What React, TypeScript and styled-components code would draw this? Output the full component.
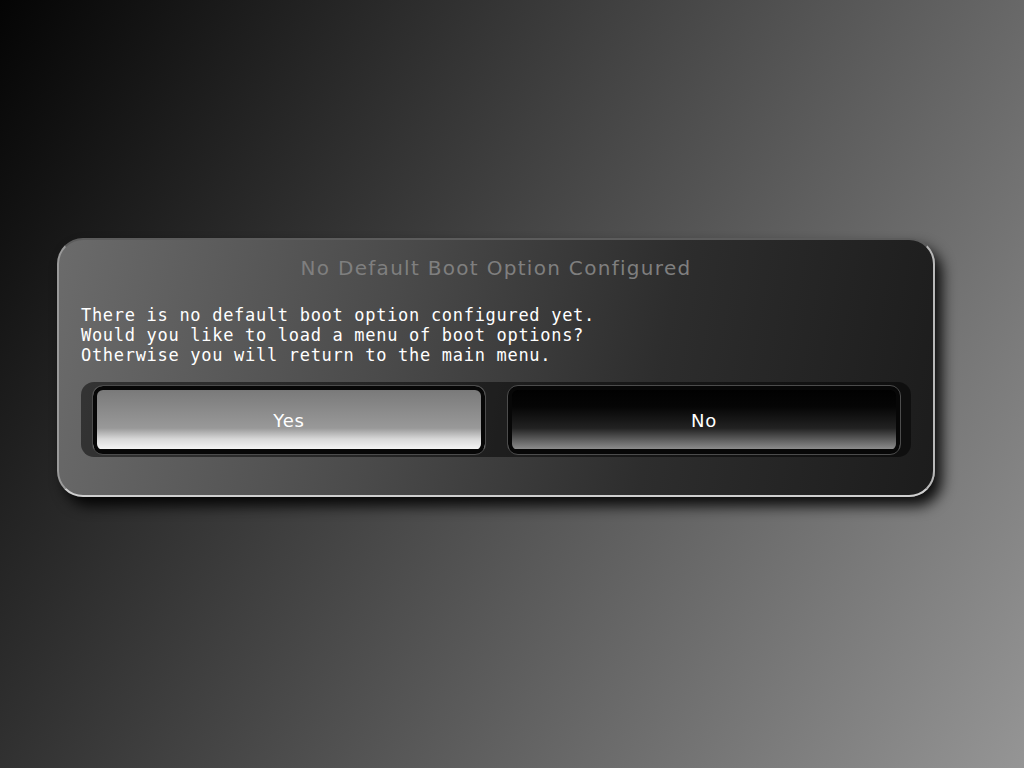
import React from "react";
import styled, { createGlobalStyle } from "styled-components";

const GlobalStyle = createGlobalStyle`
  html, body {
    margin: 0;
    padding: 0;
    height: 100%;
  }
  body {
    background: linear-gradient(121deg, #040404 0%, #959595 100%);
    font-family: "DejaVu Sans", sans-serif;
    overflow: hidden;
  }
`;

const Screen = styled.div`
  width: 1024px;
  height: 768px;
  box-sizing: border-box;
  padding: 238px 0 0 57px;
`;

const Dialog = styled.div`
  width: 878px;
  height: 259px;
  box-sizing: border-box;
  border-radius: 26px;
  border: 2px solid;
  border-color: #5c5c5c #b8b8b8 #cfcfcf #9a9a9a;
  background: linear-gradient(100deg, #6b6b6b 0%, #4a4a4a 38%, #2d2d2d 68%, #1c1c1c 100%);
  box-shadow: 7px 9px 14px rgba(0, 0, 0, 0.9);
  padding: 13px 22px 0 22px;
  display: flex;
  flex-direction: column;
`;

const Title = styled.div`
  height: 30px;
  line-height: 30px;
  text-align: center;
  font-size: 20px;
  letter-spacing: 1.3px;
  color: #7f7f7f;
`;

const Message = styled.div`
  margin-top: 22px;
  font-family: "DejaVu Sans Mono", monospace;
  font-size: 17px;
  letter-spacing: 0.7px;
  line-height: 20px;
  color: #ffffff;
  white-space: pre;
`;

const ButtonTrack = styled.div`
  margin-top: 17px;
  height: 75px;
  box-sizing: border-box;
  padding: 3px 10px 2px 11px;
  border-radius: 13px;
  background: rgba(0, 0, 0, 0.5);
  display: flex;
  gap: 21px;
`;

const ChoiceButton = styled.button<{ $selected: boolean }>`
  flex: 1;
  height: 70px;
  border: 1px solid #4c4c4c;
  border-radius: 11px;
  box-shadow: inset 0 0 0 4px #070707;
  background: ${p =>
    p.$selected
      ? "linear-gradient(180deg, #6e6e6e 0%, #7b7b7b 8%, #999999 62%, #d8d8d8 78%, #f2f2f2 92%, #070707 93%)"
      : "linear-gradient(180deg, #000000 0%, #050505 30%, #222222 62%, #5a5a5a 78%, #8a8a8a 92%, #070707 93%)"};
  color: #ffffff;
  font-family: "DejaVu Sans", sans-serif;
  font-size: 18px;
  letter-spacing: 0.8px;
  cursor: pointer;
  padding: 0;
`;

export default function App() {
  return (
    <>
      <GlobalStyle />
      <Screen>
        <Dialog>
          <Title>No Default Boot Option Configured</Title>
          <Message>
            {"There is no default boot option configured yet.\nWould you like to load a menu of boot options?\nOtherwise you will return to the main menu."}
          </Message>
          <ButtonTrack>
            <ChoiceButton $selected>Yes</ChoiceButton>
            <ChoiceButton $selected={false}>No</ChoiceButton>
          </ButtonTrack>
        </Dialog>
      </Screen>
    </>
  );
}
